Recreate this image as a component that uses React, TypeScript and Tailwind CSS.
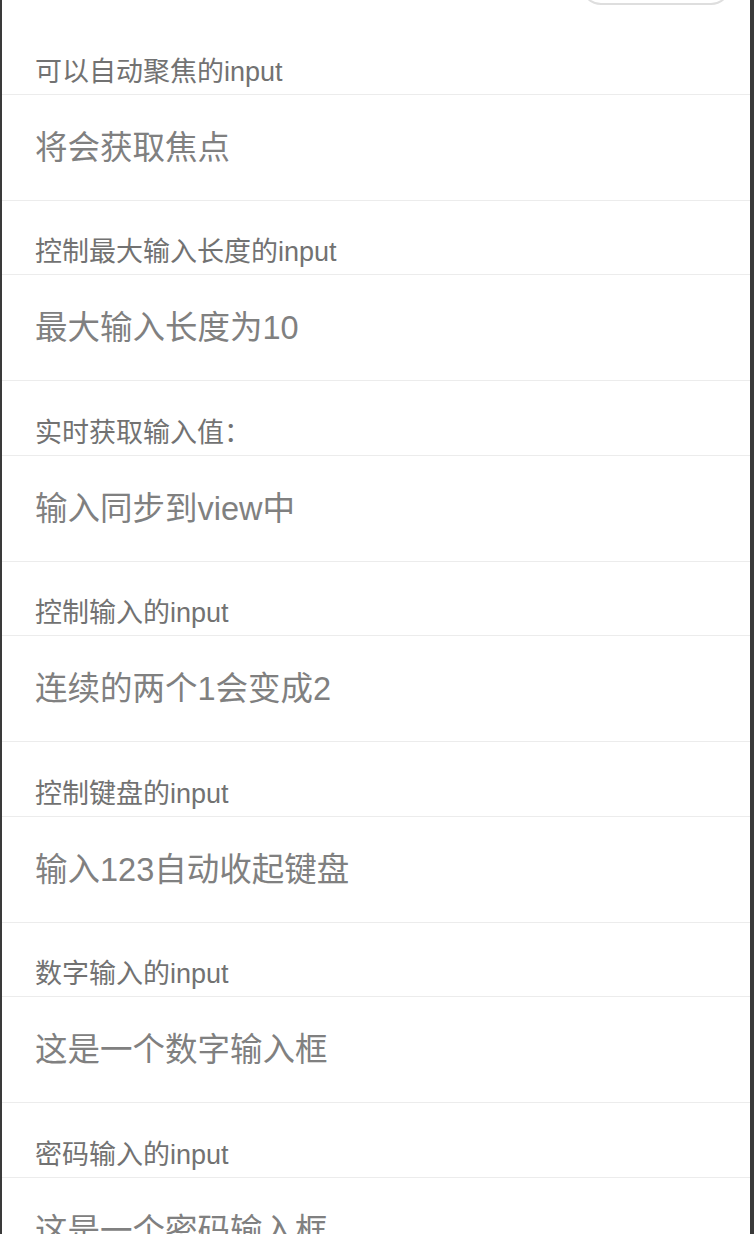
import React from 'react';

interface Section {
  label: string;
  placeholder: string;
}

const sections: Section[] = [
  { label: '可以自动聚焦的input', placeholder: '将会获取焦点' },
  { label: '控制最大输入长度的input', placeholder: '最大输入长度为10' },
  { label: '实时获取输入值：', placeholder: '输入同步到view中' },
  { label: '控制输入的input', placeholder: '连续的两个1会变成2' },
  { label: '控制键盘的input', placeholder: '输入123自动收起键盘' },
  { label: '数字输入的input', placeholder: '这是一个数字输入框' },
  { label: '密码输入的input', placeholder: '这是一个密码输入框' },
];

const font = { fontFamily: '"Liberation Sans", "Noto Sans CJK SC", sans-serif' };

export default function App() {
  return (
    <div
      className="h-[1234px] overflow-hidden bg-white border-l-2 border-r-4 border-[#3a3a3a]"
      style={font}
    >
      <div className="h-[20px] flex justify-end pr-[19px]">
        <button className="-mt-[35px] w-[150px] h-[40px] rounded-full border-2 border-[#dedede] bg-white" />
      </div>
      {sections.map((s) => (
        <div key={s.label}>
          <div className="h-[74.5px] flex items-end pl-[33px] pb-[4px] border-b border-[#ececec]">
            <span className="text-[27px] leading-[36px] text-[#727272]">{s.label}</span>
          </div>
          <div className="h-[106px] flex items-center pl-[33px] pt-[1px] border-b border-[#ececec]">
            <input
              type="text"
              placeholder={s.placeholder}
              className="w-full bg-transparent outline-none text-[32.5px] leading-[44px] text-[#333] placeholder:text-[#808080]"
              style={font}
            />
          </div>
        </div>
      ))}
    </div>
  );
}
